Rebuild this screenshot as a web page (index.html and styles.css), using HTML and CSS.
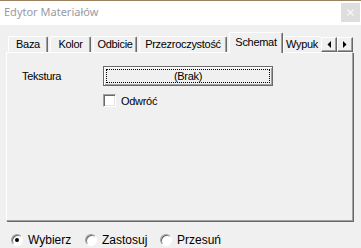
FILE: index.html
```html
<!DOCTYPE html>
<html lang="pl">
<head>
<meta charset="utf-8">
<title>Edytor Materiałów</title>
<link rel="stylesheet" href="styles.css">
</head>
<body>
<div class="window">
  <div class="titlebar">
    <span class="title">Edytor Materiałów</span>
    <div class="close">
      <svg width="7" height="7" viewBox="0 0 7 7"><path d="M0.5 0.5L6.5 6.5M6.5 0.5L0.5 6.5" stroke="#f6f6f6" stroke-width="1.3"/></svg>
    </div>
  </div>
  <div class="content">
    <div class="tabstrip">
      <div class="tab tab-baza">Baza</div>
      <div class="tab tab-kolor">Kolor</div>
      <div class="tab tab-odbicie">Odbicie</div>
      <div class="tab tab-przezr">Przezroczystość</div>
      <div class="tab tab-schemat active">Schemat</div>
      <div class="tab tab-wypuk">Wypuk</div>
      <div class="scroll">
        <div class="arrow"><svg width="4" height="7" viewBox="0 0 4 7"><path d="M4 0L0.5 3.5L4 7Z" fill="#000"/></svg></div>
        <div class="arrow"><svg width="4" height="7" viewBox="0 0 4 7"><path d="M0 0L3.5 3.5L0 7Z" fill="#000"/></svg></div>
      </div>
    </div>
    <div class="panel">
      <div class="row">
        <span class="label">Tekstura</span>
        <div class="btn">(Brak)</div>
      </div>
      <div class="check-row">
        <span class="checkbox"></span>
        <span class="check-label">Odwróć</span>
      </div>
    </div>
    <div class="radios">
      <div class="opt opt-1"><span class="radio"><span class="dot"></span></span><span class="opt-text">Wybierz</span></div>
      <div class="opt opt-2"><span class="radio"></span><span class="opt-text">Zastosuj</span></div>
      <div class="opt opt-3"><span class="radio"></span><span class="opt-text">Przesuń</span></div>
    </div>
  </div>
</div>
</body>
</html>
```
FILE: styles.css
```css
html, body {
  margin: 0;
  padding: 0;
  background: #f0f0f0;
}
body {
  font-family: "Liberation Sans", Arial, sans-serif;
  font-size: 11px;
  color: #000;
}
.window {
  width: 361px;
  height: 248px;
  overflow: hidden;
}
.titlebar {
  height: 24px;
  border-top: 1px solid #9d8262;
  background: #fff;
  display: flex;
  justify-content: space-between;
  align-items: flex-start;
}
.title {
  font-family: "Noto Sans", sans-serif;
  font-size: 11px;
  line-height: 15px;
  color: #9a9aa2;
  margin: 3px 0 0 4px;
}
.close {
  width: 19px;
  height: 19px;
  margin: 2px 1px 0 0;
  background: #dedede;
  display: flex;
  align-items: center;
  justify-content: center;
}
.content {
  padding: 0 8px 0 6px;
}
.tabstrip {
  display: flex;
  align-items: flex-end;
  height: 20px;
  margin-top: 7px;
}
.tab {
  box-sizing: border-box;
  height: 16px;
  margin-left: 2px;
  padding-top: 1px;
  line-height: 13px;
  text-align: center;
  letter-spacing: -0.3px;
  white-space: nowrap;
  overflow: hidden;
  background: #f0f0f0;
  border-top: 1px solid #fff;
  border-left: 1px solid #fff;
  border-right: 1px solid #696969;
  box-shadow: inset -1px 0 0 #a0a0a0;
  border-radius: 2px 2px 0 0;
}
.tab-baza { width: 40px; }
.tab-kolor { width: 41px; }
.tab-odbicie { width: 44px; }
.tab-przezr { width: 88px; }
.tab-schemat { width: 54px; }
.tab-wypuk {
  width: 38px;
  margin-left: 0;
  text-align: left;
  padding-left: 2px;
  border-right: none;
  box-shadow: none;
}
.tab.active {
  height: 21px;
  margin-bottom: -1px;
  padding-top: 3px;
  position: relative;
  z-index: 1;
}
.scroll {
  display: flex;
  align-self: flex-start;
  margin-top: 5px;
}
.arrow {
  box-sizing: border-box;
  width: 16px;
  height: 15px;
  background: #f0f0f0;
  border: 1px solid;
  border-color: #fff #696969 #696969 #fff;
  box-shadow: inset -1px -1px 0 #a0a0a0;
  display: flex;
  align-items: center;
  justify-content: center;
}
.panel {
  box-sizing: border-box;
  height: 169px;
  border: 1px solid;
  border-color: #fff #a0a0a0 #a0a0a0 #fff;
  box-shadow: 1px 1px 0 #696969;
  padding: 13px 0 0 15px;
}
.row {
  display: flex;
  align-items: center;
  height: 20px;
}
.label {
  width: 81px;
  letter-spacing: -0.3px;
}
.btn {
  box-sizing: border-box;
  width: 170px;
  height: 20px;
  border: 1px solid #696969;
  box-shadow: inset 1px 1px 0 #fff, inset -1px -1px 0 #a0a0a0;
  outline: 1px dotted #000;
  outline-offset: -4px;
  display: flex;
  align-items: center;
  justify-content: center;
  letter-spacing: -0.3px;
}
.check-row {
  display: flex;
  align-items: center;
  gap: 5px;
  margin: 8px 0 0 81px;
}
.checkbox {
  box-sizing: border-box;
  width: 13px;
  height: 13px;
  background: #fff;
  border: 1px solid;
  border-color: #a0a0a0 #fff #fff #a0a0a0;
  box-shadow: inset 1px 1px 0 #696969, inset -1px -1px 0 #e3e3e3;
}
.check-label {
  letter-spacing: -0.3px;
}
.radios {
  display: flex;
  align-items: center;
  height: 16px;
  margin-top: 11px;
  padding-left: 5px;
}
.opt {
  display: flex;
  align-items: center;
  gap: 5px;
  font-size: 12px;
}
.opt-1 { width: 74px; }
.opt-2 { width: 75px; }
.radio {
  box-sizing: border-box;
  width: 12px;
  height: 12px;
  border-radius: 50%;
  background: #fff;
  border: 1px solid;
  border-color: #a0a0a0 #fff #fff #a0a0a0;
  box-shadow: inset 1px 1px 0 #696969;
  display: flex;
  align-items: center;
  justify-content: center;
}
.dot {
  width: 4px;
  height: 4px;
  border-radius: 50%;
  background: #000;
}
```
